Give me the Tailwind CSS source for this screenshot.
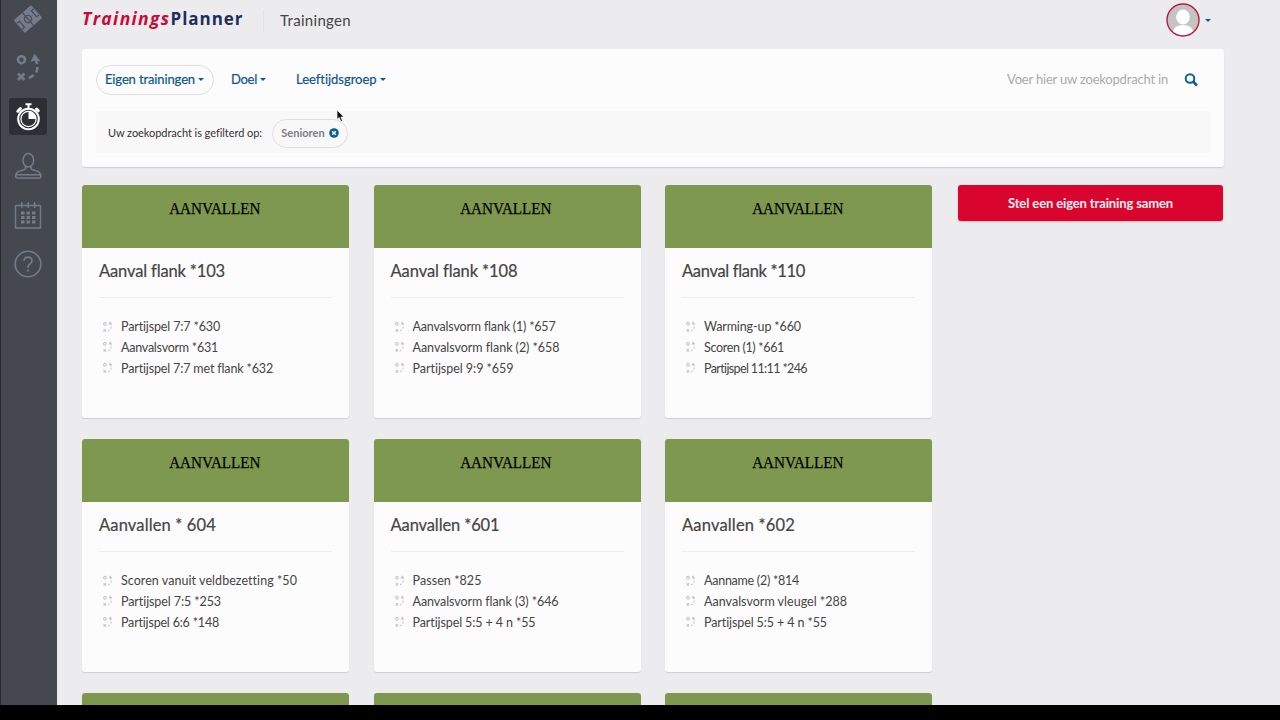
<!DOCTYPE html>
<html lang="nl">
<head>
<meta charset="utf-8">
<title>TrainingsPlanner</title>
<script src="https://cdn.jsdelivr.net/npm/@tailwindcss/browser@4"></script>
</head>
<body class="h-[720px] w-[1280px] overflow-hidden bg-black font-['Lato',sans-serif] text-[#444] [font-variant-ligatures:none]">
<svg class="hidden">
  <symbol id="tactic" viewBox="0 0 28 30">
    <g fill="none" stroke="currentColor" stroke-width="2.6">
      <circle cx="7.500" cy="6.700" r="3.500"/>
      <path d="M4 20.500l6.500 6.500M10.500 20.500l-6.500 6.500"/>
      <path d="M21.500 5.500l1.500 5.500M23.400 14q0 3-1.200 5.500M19.800 22q-1.800 1.800-5 3"/>
    </g>
    <path d="M20.500 .5l-4 8.500 4.500-1.500 5.500 1z" fill="currentColor"/>
  </symbol>
</svg>
<div class="flex h-[705px] overflow-hidden bg-[#ececee]">
  <nav class="flex w-[57px] shrink-0 flex-col items-center gap-3 border-l border-[#25282c] bg-[#45494f] pr-[2px] text-[#747b89]">
    <a class="flex h-[37px] w-[38px] items-center justify-center">
      <svg class="h-[30px] w-[30px]" viewBox="0 0 30 30"><g transform="rotate(-41 15 15)"><rect x="3.500" y="6.500" width="23" height="17" rx="1" fill="currentColor"/><g fill="none" stroke="#45494f" stroke-width="1.100"><path d="M15 6.500v17M4 11h3v8h-3M26 11h-3v8h3"/><circle cx="15" cy="15" r="3.500"/></g></g></svg>
    </a>
    <a class="flex h-[37px] w-[38px] items-center justify-center"><svg class="h-[30px] w-[28px]"><use href="#tactic"/></svg></a>
    <a class="flex h-[37px] w-[38px] items-center justify-center rounded-[3px] bg-[#2c2f36] text-white">
      <svg class="h-[30px] w-[28px]" viewBox="0 0 28 30" fill="none" stroke="currentColor"><circle cx="14.500" cy="17" r="10.300" stroke-width="2"/><circle cx="14.500" cy="17" r="7.600" stroke-width="1.200"/><path d="M14.500 17V9.500a7.500 7.500 0 0 1 7.500 7.500z" fill="currentColor" stroke="none"/><path d="M14.500 7V2.500M11.500 2.300h6" stroke-width="2"/><path d="M3.800 9.200l2.700-2.700M22.500 7l1.800 1.800" stroke-width="3" stroke-linecap="round"/></svg>
    </a>
    <a class="flex h-[37px] w-[38px] items-center justify-center">
      <svg class="h-[28px] w-[28px]" viewBox="0 0 28 28" fill="none" stroke="currentColor" stroke-width="1.500"><ellipse cx="14.300" cy="8.200" rx="5.300" ry="6.700"/><path d="M11.500 14v2.500c0 1.500-5 2-7.200 3.200-2 1.100-2.800 3.300-2.600 5.300q0 1 1.300 1h22.500q1.300 0 1.300-1c.2-2-.6-4.200-2.600-5.300-2.200-1.200-7.200-1.700-7.200-3.200V14M2 22.800h24.500"/></svg>
    </a>
    <a class="flex h-[37px] w-[38px] items-center justify-center">
      <svg class="h-[28px] w-[28px]" viewBox="0 0 28 28" fill="none" stroke="currentColor" stroke-width="1.500"><rect x="1.500" y="4.500" width="25" height="22.500" rx=".5"/><path d="M7.800 1v6M14.200 1v6M20.600 1v6"/><path d="M7 12h14.500M7 16.500h14.500M7 21h14.500" stroke-width="2.800" stroke-dasharray="3.500 2"/></svg>
    </a>
    <a class="flex h-[37px] w-[38px] items-center justify-center">
      <svg class="h-[28px] w-[28px]" viewBox="0 0 28 28" fill="none" stroke="currentColor" stroke-width="1.600"><circle cx="14" cy="14" r="12.800"/><path d="M10 11q0-3.900 4-3.900t4 3.700q0 1.900-2 3.100t-2 3.300v.8M14 19.500v2.300"/></svg>
    </a>
  </nav>
  <main class="w-[1167px] pl-[25px]">
    <header class="flex h-[49px] items-start">
      <div class="w-[181px] whitespace-nowrap pt-[6px] font-['Open_Sans',sans-serif] text-[17px] leading-[25px] font-bold text-[#1d2f5c]"><span data-w="88.5" class="text-[17.500px] italic text-[#c9093a]">Trainings</span><span data-w="73">Planner</span></div>
      <div class="mt-[10px] h-[22px] border-l border-[#e2e2e4]"></div>
      <h1 class="ml-[16px] mt-[8px] text-[15px] leading-[24px]"><span data-w="71">Trainingen</span></h1>
      <div class="ml-auto mr-[13px] mt-[3px] flex items-center gap-[5px]">
        <svg class="h-[34px] w-[34px]" viewBox="0 0 34 34"><defs><clipPath id="face"><circle cx="17" cy="17" r="15.500"/></clipPath></defs><circle cx="17" cy="17" r="15.800" fill="#c4c4c4"/><g clip-path="url(#face)" fill="#fff"><ellipse cx="17" cy="14" rx="6.800" ry="7.500"/><path d="M6 34q0-12 11-12t11 12z"/></g><circle cx="17" cy="17" r="16" fill="none" stroke="#bd1740" stroke-width="1.400"/></svg>
        <i class="border-x-[3px] border-t-[3px] border-x-transparent border-t-[#075f94]"></i>
      </div>
    </header>
    <section class="h-[118px] rounded-[3px] bg-[#fdfcfd] px-[14px] pt-[15px] shadow-[0_1px_1px_#cfcfd2]">
      <div class="flex h-[31px] items-center text-[13px] text-[#0b568b] [-webkit-text-stroke:0.2px_currentColor]">
        <button class="flex h-[30px] w-[118px] items-center justify-center gap-[3px] rounded-full border border-[#e3dcdf] pr-px whitespace-nowrap"><span data-w="90">Eigen trainingen</span><i class="border-x-[3px] border-t-[3px] border-x-transparent border-t-[#075f94]"></i></button>
        <button class="ml-[17px] flex w-[65px] items-center gap-[3px]"><span data-w="26">Doel</span><i class="border-x-[3px] border-t-[3px] border-x-transparent border-t-[#075f94]"></i></button>
        <button class="flex items-center gap-[3px]"><span data-w="80.5">Leeftijdsgroep</span><i class="border-x-[3px] border-t-[3px] border-x-transparent border-t-[#075f94]"></i></button>
        <span class="ml-auto mr-[16px] text-[13px] text-[#aaa] [-webkit-text-stroke:0]" data-w="161">Voer hier uw zoekopdracht in</span>
        <svg class="mr-[12px] h-[14px] w-[14px]" viewBox="0 0 14 14" fill="none" stroke="#0b5f95"><circle cx="6" cy="5.500" r="4.300" stroke-width="2"/><path d="M9 8.500l4 4" stroke-width="2.500"/></svg>
      </div>
      <div class="mt-[16px] flex h-[42px] items-center bg-[#f8f8f8] pl-[12px] pt-[2px] text-[11px]">
        <span class="w-[164px] pt-px text-[#333]"><span data-w="154">Uw zoekopdracht is gefilterd op:</span></span>
        <span class="flex h-[29px] w-[76px] items-center justify-center gap-[4px] rounded-full border border-[#dededf] text-[#7d7d82]"><b class="font-bold" data-w="43.5">Senioren</b><svg class="h-[10px] w-[10px]" viewBox="0 0 10 10"><circle cx="5" cy="5" r="4.800" fill="#0b5f95"/><path d="M3.200 3.200l3.600 3.600M6.800 3.200l-3.600 3.600" stroke="#fff" stroke-width="1.400"/></svg></span>
      </div>
    </section>
    <div class="mt-[17.500px] flex items-start">
      <div id="cards" class="grid w-[850px] shrink-0 grid-cols-3 gap-x-[24.500px] gap-y-[20.500px]"></div>
      <button class="mt-[0.500px] ml-[26px] h-[36px] w-[265px] shrink-0 rounded-[3px] bg-[#d9052e] pt-[2px] text-[13px] font-bold text-[#ffeef2] shadow-[0_1px_2px_#bbb]"><span data-w="165">Stel een eigen training samen</span></button>
    </div>
  </main>
</div>
<svg class="absolute left-[336px] top-[109px] h-[14px] w-[9px]" viewBox="0 0 9 14"><path d="M1 1v9.500l2.200-2 1.600 4 1.700-.7-1.600-3.800H8z" fill="#111" stroke="#fff" stroke-width=".7"/></svg>
<script>
// Each card: title followed by its exercises, every text with its set width in px.
const data = [
  [['Aanval flank *103', 126], ['Partijspel 7:7 *630', 99], ['Aanvalsvorm *631', 97], ['Partijspel 7:7 met flank *632', 152]],
  [['Aanval flank *108', 127], ['Aanvalsvorm flank (1) *657', 143], ['Aanvalsvorm flank (2) *658', 147], ['Partijspel 9:9 *659', 101]],
  [['Aanval flank *110', 123], ['Warming-up *660', 97], ['Scoren (1) *661', 80], ['Partijspel 11:11 *246', 103]],
  [['Aanvallen * 604', 117], ['Scoren vanuit veldbezetting *50', 176], ['Partijspel 7:5 *253', 100], ['Partijspel 6:6 *148', 98]],
  [['Aanvallen *601', 109], ['Passen *825', 69], ['Aanvalsvorm flank (3) *646', 146], ['Partijspel 5:5 + 4 n *55', 123]],
  [['Aanvallen *602', 113], ['Aanname (2) *814', 95], ['Aanvalsvorm vleugel *288', 143], ['Partijspel 5:5 + 4 n *55', 123]],
  null, null, null
];
document.getElementById('cards').innerHTML = data.map(card => {
  const [head, ...items] = card || [];
  return `
  <article class="h-[233.500px] overflow-hidden rounded-[3px] bg-[#fdfcfd] shadow-[0_1px_1px_#cfcfd2]">
    <div class="flex h-[63.500px] justify-center bg-[#7f9850] pt-[11px] pr-[2px] font-['Liberation_Serif',serif] text-[17.500px] leading-[24px] text-black">${card ? '<span class="scale-x-[0.865] [-webkit-text-stroke:0.25px_black]">AANVALLEN</span>' : ''}</div>
    ${card ? `<div class="px-[17px]">
      <h2 class="h-[50px] border-b border-[#eeecee] pt-[11px] text-[16.500px] leading-[24px] [-webkit-text-stroke:0.2px_currentColor]"><span data-w="${head[1]}">${head[0]}</span></h2>
      <ul class="pt-[19.200px] text-[12.500px] leading-[20.700px]">${items.map(([text, w]) => `
        <li class="flex h-[20.700px] items-center gap-[8px] pl-[3px]"><svg class="-mt-[2px] h-[12px] w-[11px] text-[#c6c4ca]"><use href="#tactic"/></svg><span class="whitespace-nowrap" data-w="${w}">${text}</span></li>`).join('')}
      </ul>
    </div>` : ''}
  </article>`;
}).join('');
// Space the letters so that every label takes its set width.
function fit() {
  const all = [...document.querySelectorAll('[data-w]')];
  for (const el of all) { el.style.letterSpacing = '0px'; el.style.whiteSpace = 'nowrap'; }
  const widths = all.map(el => { const r = document.createRange(); r.selectNodeContents(el); return r.getBoundingClientRect().width; });
  all.forEach((el, i) => { el.style.letterSpacing = (el.dataset.w - widths[i]) / el.textContent.length + 'px'; });
}
fit();
addEventListener('load', () => { fit(); document.fonts.ready.then(fit); requestAnimationFrame(fit); });
</script>
</body>
</html>
